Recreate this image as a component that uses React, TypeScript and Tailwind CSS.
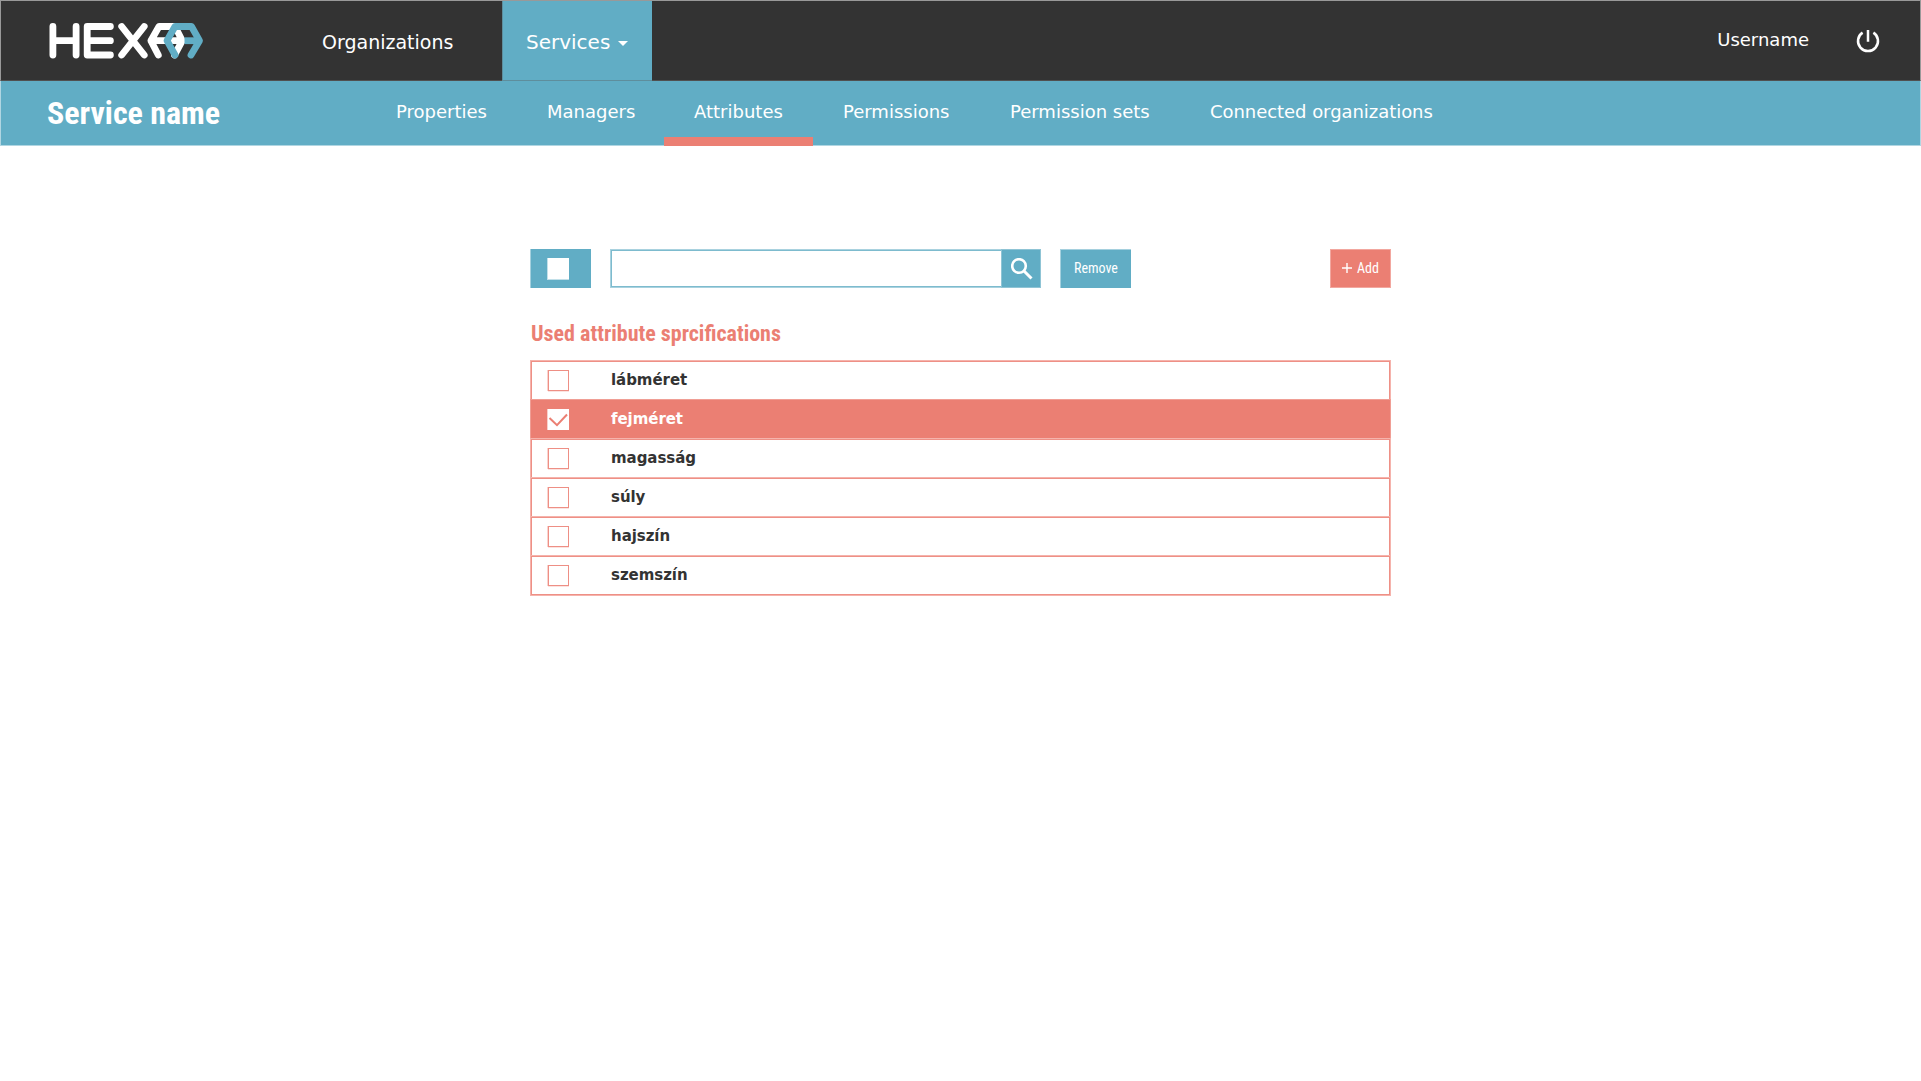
import type { ReactNode } from "react";

const tabs = [
  { label: "Properties", width: "w-[151px]" },
  { label: "Managers", width: "w-[147px]" },
  { label: "Attributes", width: "w-[149px]", active: true },
  { label: "Permissions", width: "w-[167px]" },
  { label: "Permission sets", width: "w-[200px]" },
  { label: "Connected organizations", width: "w-[290px] tracking-[-0.05px]" },
];

const attributes = [
  { name: "lábméret" },
  { name: "fejméret", checked: true },
  { name: "magasság" },
  { name: "súly" },
  { name: "hajszín" },
  { name: "szemszín" },
];

function Condensed({ children, className }: { children: ReactNode; className: string }) {
  return (
    <span className={`inline-block whitespace-nowrap font-['Roboto'] [font-stretch:75%] ${className}`}>
      {children}
    </span>
  );
}

function Logo() {
  return (
    <svg
      className="ml-[48px] mt-[21px] h-[40px] w-[158px]"
      viewBox="48 21 158 40"
      fill="none"
      stroke="#fff"
      strokeWidth="6.8"
      strokeLinecap="round"
      strokeLinejoin="round"
    >
      <path d="M52.9 26.5V55M76.1 26.5V55M52.9 40.7H76" />
      <path d="M110.4 26.5H87.2V55H110.4M87.2 40.7H110.4" />
      <path d="M121.7 26.5L144.2 55M144.2 26.5L121.7 55" />
      <path d="M158.3 55L150.9 40.7L159 26.5H175L182.3 40.7L174.5 55M151 40.7H182" />
      <path stroke="#61adc5" d="M175 55L167 40.7L175 26.5H191.5L199.5 40.7L191 55" />
      <path stroke="#61adc5" strokeLinecap="butt" d="M184.5 40.7H199" />
    </svg>
  );
}

function Checkbox({ checked }: { checked?: boolean }) {
  return (
    <span
      className={`ml-[17px] mt-[9px] flex h-[21px] w-[21px] shrink-0 border bg-white ${
        checked
          ? "border-white shadow-[-1px_0_0_#f8d0cb]"
          : "border-[#ee8f85] shadow-[-1px_0_0_#f9d3cf,0_1px_0_#fbe3e0]"
      }`}
    >
      {checked && (
        <svg viewBox="0 0 20 20" className="-ml-px h-5 w-5 shrink-0" fill="none" stroke="#eb7f73" strokeWidth="2">
          <path d="M1.5 8L9 15.2L19 4.5" />
        </svg>
      )}
    </span>
  );
}

export default function App() {
  return (
    <div className="h-[1081px] w-[1921px] overflow-hidden bg-white font-['DejaVu_Sans',sans-serif] text-white">
      <header className="flex h-[81px] border-x border-b border-t border-x-[#999] border-b-[#505050] border-t-[#999] bg-[#333]">
        <div className="-ml-px -mt-px w-[322px] shrink-0">
          <Logo />
        </div>
        <nav className="flex text-[19px]">
          <a className="w-[180px] pt-[30px] leading-[22px]">Organizations</a>
          <a className="-mb-px flex w-[150px] border-b border-l border-[#5e8e9d] bg-[#61adc5] pl-[23px] pt-[29px] text-[20px] leading-[24px]">
            Services
            <svg viewBox="0 0 10 5" className="ml-[8px] mt-[11px] h-[5px] w-[10px] fill-white">
              <path d="M0 0H10L5 5Z" />
            </svg>
          </a>
        </nav>
        <div className="ml-auto flex">
          <span className="pt-[28px] text-[18px] leading-[21px]">Username</span>
          <svg
            viewBox="0 0 24 24"
            className="ml-[47px] mr-[40px] mt-[28px] h-[24px] w-[24px]"
            fill="none"
            stroke="#fff"
            strokeWidth="2.5"
          >
            <path d="M12 1V12.8M6.6 3.6A10 10 0 1 0 17.4 3.6" />
          </svg>
        </div>
      </header>

      <div className="flex h-[65px] border-x border-b border-[#b0d6e2] bg-[#61adc5]">
        <h1 className="w-[395px] shrink-0 pl-[46px] pt-[14px] leading-[36px]">
          <Condensed className="text-[32px] font-bold">Service name</Condensed>
        </h1>
        <nav className="flex text-[18px] leading-[21px]">
          {tabs.map((t) => (
            <a key={t.label} className={`relative shrink-0 whitespace-nowrap pt-[20px] ${t.width}`}>
              {t.label}
              {t.active && <span className="absolute -bottom-px -left-[30px] h-[9px] w-[149px] bg-[#eb7f73]" />}
            </a>
          ))}
        </nav>
      </div>

      <main className="ml-[530px] w-[861px] pt-[103px]">
        <div className="flex h-[39px]">
          <button className="flex w-[61px] border-l border-[#a5d0de] bg-[#61adc5] pt-[9px]">
            <span className="ml-[16px] block h-[22px] w-[22px] border-b border-l border-[#c2e0e9] bg-white" />
          </button>
          <div className="ml-[19px] flex w-[431px] border border-[#a9d2df] shadow-[inset_0_0_0_1px_#7dbbce]">
            <input className="min-w-0 flex-1 bg-transparent text-[#333] outline-none" />
            <button className="-m-px flex w-[40px] border border-[#8fc4d5] bg-[#61adc5] pl-[9px] pt-[8px]">
              <svg viewBox="0 0 22 22" className="h-[22px] w-[22px]" fill="none" stroke="#fff">
                <circle cx="8" cy="8" r="6.8" strokeWidth="2.6" />
                <path d="M13 13L20.5 20.5" strokeWidth="3" />
              </svg>
            </button>
          </div>
          <button className="ml-[19px] w-[71px] border-l border-t border-[#a5d0de] bg-[#61adc5] pb-[2px] pl-[13px] text-left leading-[36px]">
            <Condensed className="text-[14px]">Remove</Condensed>
          </button>
          <button className="ml-auto flex w-[61px] border border-[#f2a79f] bg-[#eb7f73] pl-[11px] text-left leading-[36px]">
            <svg viewBox="0 0 10 10" className="mr-[5px] mt-[13px] h-[10px] w-[10px] shrink-0" stroke="#fff" strokeWidth="1.4">
              <path d="M5 0V10M0 5H10" />
            </svg>
            <Condensed className="text-[14px]">Add</Condensed>
          </button>
        </div>

        <h2 className="mt-[31px] h-[41px] pl-px leading-[30px] text-[#eb7f73]">
          <Condensed className="text-[22px] font-bold">Used attribute sprcifications</Condensed>
        </h2>

        <ul className="text-[15px] font-bold">
          {attributes.map((a) => (
            <li
              key={a.name}
              className={`-mb-0.5 flex h-[41px] border ${
                a.checked
                  ? "border-[#f09e95] bg-[#eb7f73] text-white"
                  : "border-[#f5b3ac] text-[#333] shadow-[inset_0_0_0_1px_#ee9086]"
              }`}
            >
              <Checkbox checked={a.checked} />
              <span className="ml-[42px] mt-[10px] leading-[18px] tracking-[-0.05px]">{a.name}</span>
            </li>
          ))}
        </ul>
      </main>
    </div>
  );
}
